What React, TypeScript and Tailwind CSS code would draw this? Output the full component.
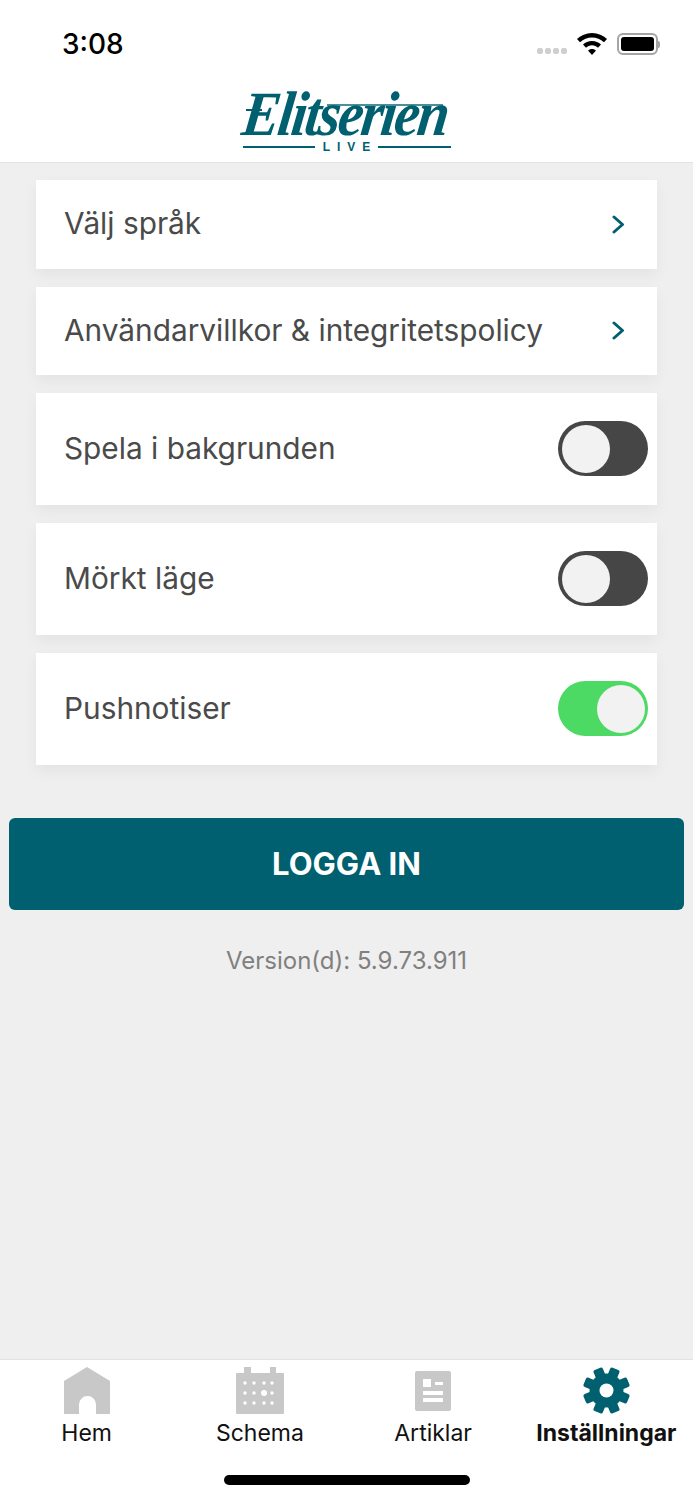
import React from 'react';

const BodyFont = "font-['Inter','Liberation_Sans',sans-serif]";

const Toggle = ({ on }: { on: boolean }) => (
    <div className={`w-[90px] h-[55px] mt-[-1px] rounded-full flex items-center p-1 ${on ? 'bg-[#4cd964] justify-end pr-[3px]' : 'bg-[#464646] justify-start'}`}>
        <div className="w-[48px] h-[48px] rounded-full bg-[#f2f2f2]" />
    </div>
);

const Chevron = () => (
    <svg width="13" height="19" viewBox="0 0 13 19" fill="none" stroke="#00606f" strokeWidth="3" strokeLinecap="round" strokeLinejoin="round">
        <path d="M2 2l8.500 7.500L2 17" />
    </svg>
);

const LinkRow = ({ label }: { label: string }) => (
    <div className="h-[88.5px] bg-white flex items-center justify-between pl-7 pr-[32px] shadow-[0_6px_14px_rgba(0,0,0,0.05)]">
        <span className="text-[29.8px] leading-[36px] mt-[-2px] text-[#4a4a4a]">{label}</span>
        <Chevron />
    </div>
);

const ToggleRow = ({ label, on }: { label: string; on: boolean }) => (
    <div className="h-[112px] bg-white flex items-center justify-between pl-7 pr-[9px] shadow-[0_6px_14px_rgba(0,0,0,0.05)]">
        <span className="text-[29.8px] leading-[36px] mt-[-2px] text-[#4a4a4a]">{label}</span>
        <Toggle on={on} />
    </div>
);

const HomeIcon = () => (
    <svg width="48" height="47" viewBox="0 0 48 47">
        <path fill="#c8c8c8" d="M24 0 47 14V47H33V37.500a8.500 8.500 0 0 0-17 0V47H1V14Z" />
    </svg>
);

const CalendarIcon = () => {
    const rows = [16, 26, 36];
    const cols = [9, 18, 28, 36];
    return (
        <svg width="48" height="47" viewBox="0 0 48 47">
            <path fill="#c8c8c8" d="M8 0h7v6h19V0h6v6h7a1 1 0 0 1 1 1v39a1 1 0 0 1-1 1H1a1 1 0 0 1-1-1V7a1 1 0 0 1 1-1h7Z" />
            {rows.flatMap(y =>
                cols.map(x => <circle key={`${x}-${y}`} cx={x} cy={y} r={x === 28 && y === 26 ? 3 : 1.7} fill="#fff" />)
            )}
        </svg>
    );
};

const ArticleIcon = () => (
    <svg width="36" height="40" viewBox="0 0 36 40">
        <rect width="36" height="40" rx="2" fill="#c8c8c8" />
        <rect x="8" y="8" width="8" height="8" fill="#fff" />
        <rect x="20" y="11" width="8" height="3" fill="#fff" />
        <rect x="8" y="20" width="20" height="4" fill="#fff" />
        <rect x="8" y="27" width="20" height="4" fill="#fff" />
    </svg>
);

const GearIcon = () => (
    <svg width="47" height="47" viewBox="0 0 47 47">
        <g fill="#00606f">
            {[0, 45, 90, 135].map(a => (
                <rect key={a} x="18.500" y="0" width="10" height="47" rx="2" transform={`rotate(${a + 22.5} 23.5 23.5)`} />
            ))}
            <circle cx="23.5" cy="23.5" r="17" />
        </g>
        <circle cx="23.5" cy="23.5" r="7" fill="#fff" />
    </svg>
);

const Tab = ({ icon, label, active }: { icon: React.ReactNode; label: string; active?: boolean }) => (
    <div className="flex flex-col items-center">
        <div className="h-[47px] flex items-center justify-center">{icon}</div>
        <span className={`mt-[4px] text-[23px] leading-[30px] text-[#111] whitespace-nowrap ${active ? 'font-bold' : ''}`}>{label}</span>
    </div>
);

const Logo = () => (
    <div className="relative w-[208px] h-[60px] text-[#00606f]">
        <span className="absolute left-0 top-[-3px] origin-left scale-x-[0.9] skew-x-[-8deg] text-[63px] leading-[48px] font-bold italic font-['Liberation_Serif',serif] tracking-[-2.5px] whitespace-nowrap">Elitserien</span>
        {/* speed lines through the wordmark */}
        <div className="absolute left-[84px] right-[8px] top-[11px] h-[2px] bg-[#00606f]/70" />
        <div className="absolute left-[3px] w-[16px] top-[16px] h-[2px] bg-[#00606f]" />
        <div className="absolute left-0 right-0 bottom-[1px] flex items-center gap-[8px]">
            <div className="flex-1 h-[2px] bg-[#00606f]" />
            <span className="font-['Liberation_Sans',sans-serif] text-[12px] leading-[10px] font-bold tracking-[7px] mr-[-7px]">LIVE</span>
            <div className="flex-1 h-[2px] bg-[#00606f]" />
        </div>
    </div>
);

export default function App() {
    return (
        <div className={`h-[1500px] w-[693px] flex flex-col bg-[#efefef] overflow-hidden ${BodyFont}`}>
            <header className="h-[163px] bg-white border-b border-[#e2e2e2] flex flex-col">
                <div className="h-[88px] flex items-start justify-between pt-[26px] pl-[62px] pr-[33px]">
                    <span className="text-[28px] leading-[36px] font-medium text-black">3:08</span>
                    <div className="flex items-center gap-[10px] h-[36px]">
                        <div className="flex gap-[2px] mt-[13px]">
                            {[0, 1, 2, 3].map(i => <div key={i} className="w-[6px] h-[6px] rounded-[2px] bg-[#cfcfcf]" />)}
                        </div>
                        <svg width="30" height="22" viewBox="0 0 30 22">
                            <path fill="#000" d="M15 0C9 0 4 2.400 0 6l3 3.200C6.400 6.200 10.500 4.400 15 4.400s8.600 1.800 12 4.800L30 6C26 2.400 21 0 15 0Z" />
                            <path fill="#000" d="M15 8c-3.600 0-6.700 1.300-9 3.500l3 3.200c1.600-1.500 3.700-2.400 6-2.400s4.400.9 6 2.400l3-3.200C21.700 9.300 18.600 8 15 8Z" />
                            <path fill="#000" d="M15 16c-1.600 0-3 .6-4 1.600L15 22l4-4.400c-1-1-2.400-1.600-4-1.600Z" />
                        </svg>
                        <div className="flex items-center">
                            <div className="w-[41px] h-[22px] rounded-[6px] border-2 border-[#a5a5a5] p-[2px]">
                                <div className="w-full h-full rounded-[3px] bg-black" />
                            </div>
                            <div className="w-[2px] h-[7px] rounded-r bg-[#a5a5a5]" />
                        </div>
                    </div>
                </div>
                <div className="flex justify-center pt-[5px]">
                    <Logo />
                </div>
            </header>

            <main className="flex-1 flex flex-col">
                <div className="flex flex-col gap-[18px] pt-[17px] px-[36px]">
                    <LinkRow label="Välj språk" />
                    <LinkRow label="Användarvillkor & integritetspolicy" />
                    <ToggleRow label="Spela i bakgrunden" on={false} />
                    <ToggleRow label="Mörkt läge" on={false} />
                    <ToggleRow label="Pushnotiser" on={true} />
                </div>
                <div className="mt-[53px] mx-[9px] h-[91.5px] rounded-[6px] bg-[#00606f] flex items-center justify-center text-white text-[31px] font-bold">
                    LOGGA IN
                </div>
                <p className="mt-[34px] text-center text-[24px] leading-[34px] text-[#808080]">Version(d): 5.9.73.911</p>
            </main>

            <nav className="h-[141px] bg-white border-t border-[#e2e2e2] flex flex-col">
                <div className="grid grid-cols-4 pt-[7px]">
                    <Tab icon={<HomeIcon />} label="Hem" />
                    <Tab icon={<CalendarIcon />} label="Schema" />
                    <Tab icon={<ArticleIcon />} label="Artiklar" />
                    <Tab icon={<GearIcon />} label="Inställningar" active />
                </div>
                <div className="mt-[27px] ml-[224px] w-[246px] h-[10px] rounded-full bg-black" />
            </nav>
        </div>
    );
}
